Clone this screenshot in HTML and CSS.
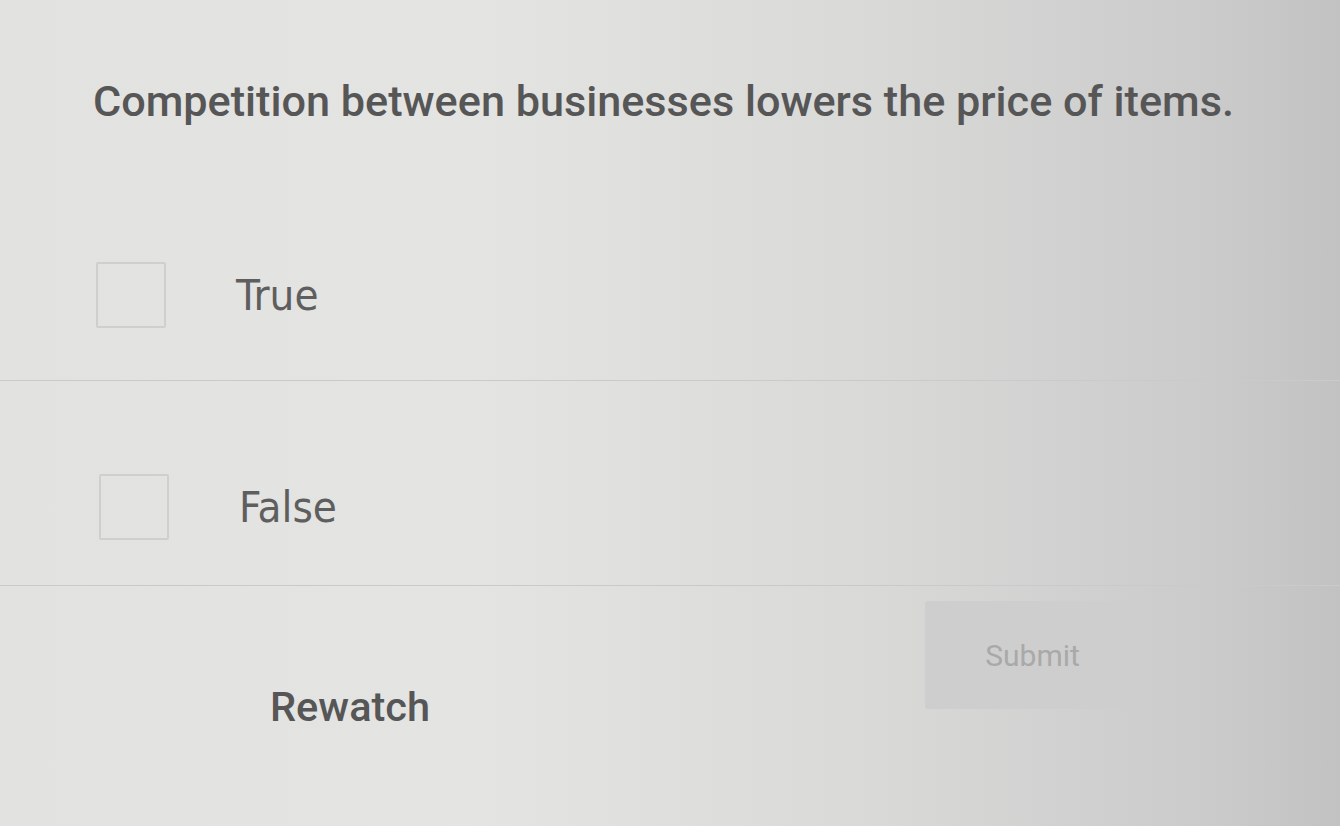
FILE: index.html
```html
<!DOCTYPE html>
<html lang="en">
<head>
<meta charset="utf-8">
<title>Quiz</title>
<link rel="stylesheet" href="styles.css">
</head>
<body>
<main class="quiz">
  <h1 class="question">Competition between businesses lowers the price of items.</h1>
  <ul class="options">
    <li class="option option-true">
      <span class="box"></span>
      <span class="label">True</span>
    </li>
    <li class="option option-false">
      <span class="box"></span>
      <span class="label">False</span>
    </li>
  </ul>
  <div class="actions">
    <button class="rewatch" type="button">Rewatch</button>
    <button class="submit" type="button" disabled>Submit</button>
  </div>
</main>
</body>
</html>
```

FILE: styles.css
```css
html, body {
  margin: 0;
  padding: 0;
  height: 100%;
}
body {
  background: linear-gradient(90deg, #e2e2e0 0%, #e4e4e2 35%, #d9d9d8 65%, #cbcbcb 90%, #c2c2c2 100%);
  font-family: Roboto, "Noto Sans", sans-serif;
  color: #555556;
  overflow: hidden;
}
.quiz {
  width: 1340px;
  height: 826px;
  box-sizing: border-box;
  padding-top: 70px;
}
.question {
  margin: 0 0 0 93px;
  font-size: 43.2px;
  font-weight: 500;
  line-height: 64px;
  white-space: nowrap;
  color: #565657;
}
.options {
  list-style: none;
  margin: 110px 0 0 0;
  padding: 0;
}
.option {
  display: flex;
  align-items: center;
  border-bottom: 1px solid #cacaca;
}
.option-true {
  padding: 18px 0 52px 96px;
}
.option-false {
  padding: 93px 0 45px 99px;
}
.box {
  width: 70px;
  height: 66px;
  box-sizing: border-box;
  border: 2px solid #cfcfcf;
  border-radius: 2px;
  flex: none;
}
.label {
  margin-left: 70px;
  font-family: "DejaVu Sans Condensed", "DejaVu Sans", Roboto, sans-serif;
  font-stretch: condensed;
  font-size: 43.5px;
  color: #5e5e5f;
}
.actions {
  display: flex;
  align-items: flex-start;
  padding: 15px 200px 0 270px;
}
.rewatch {
  background: none;
  border: none;
  padding: 0;
  margin-top: 82px;
  font-family: inherit;
  font-size: 41.5px;
  font-weight: 500;
  line-height: 48px;
  color: #565657;
  cursor: pointer;
}
.submit {
  margin-left: auto;
  width: 215px;
  height: 108px;
  background: #cecece;
  border: none;
  border-radius: 3px;
  font-family: Roboto, sans-serif;
  font-size: 30px;
  color: #a9a9a9;
}
```
